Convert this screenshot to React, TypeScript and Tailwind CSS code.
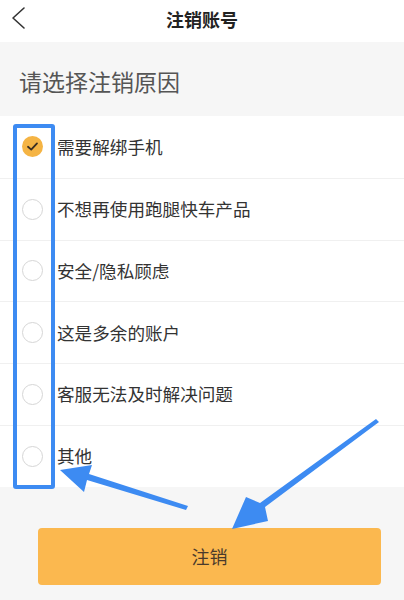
const reasons = [
  '需要解绑手机',
  '不想再使用跑腿快车产品',
  '安全/隐私顾虑',
  '这是多余的账户',
  '客服无法及时解决问题',
  '其他',
];

const font = { fontFamily: '"Noto Sans CJK SC", "Noto Sans", sans-serif' };

export default function App() {
  return (
    <div className="relative w-[404px] h-[600px] overflow-hidden bg-[#f6f6f6]" style={font}>
      {/* Header */}
      <header className="h-[42px] bg-white flex items-center relative">
        <svg className="absolute left-[8px] top-[5px]" width="22" height="26" viewBox="0 0 22 26" fill="none">
          <path d="M16 3 L5 13 L16 23" stroke="#333" strokeWidth="1.6" strokeLinecap="round" strokeLinejoin="round" />
        </svg>
        <div className="flex-1 text-center text-[18px] font-bold text-[#222] -mt-[4px]">注销账号</div>
      </header>

      {/* Title */}
      <div className="h-[74px] flex items-center px-[19px] pt-[4px] text-[23px] text-[#555]">请选择注销原因</div>

      {/* Reasons */}
      <ul className="bg-white">
        {reasons.map((r, i) => (
          <li
            key={r}
            className={`h-[61.8px] flex items-center pl-[22px] ${i > 0 ? 'border-t border-[#f0f0f0]' : ''}`}
          >
            {i === 0 ? (
              <span className="w-[21px] h-[21px] rounded-full bg-[#f5b444] flex items-center justify-center">
                <svg width="13" height="13" viewBox="0 0 13 13" fill="none">
                  <path d="M2 6.8 L5.2 9.6 L11 3.4" stroke="#3a2e22" strokeWidth="1.8" strokeLinecap="round" strokeLinejoin="round" />
                </svg>
              </span>
            ) : (
              <span className="w-[21px] h-[21px] rounded-full border border-[#d6d6d6] bg-white" />
            )}
            <span className="ml-[14px] text-[17.6px] text-[#333]">{r}</span>
          </li>
        ))}
      </ul>

      {/* Button */}
      <div className="pl-[38px] pr-[23px] pt-[41px]">
        <button className="w-full h-[57px] rounded-[4px] bg-[#fbb84f] text-[18px] text-[#4a3a2c]">注销</button>
      </div>

      {/* Annotation overlay */}
      <div className="absolute left-[13px] top-[124px] w-[42px] h-[365px] border-[4px] border-[#3d8bf2] rounded-[3px]" />
      <svg className="absolute inset-0 pointer-events-none" width="404" height="600" viewBox="0 0 404 600">
        <polygon points="60,470 92,465 89,474 188,506 186,510 87,480 84,492" fill="#3d8bf2" />
        <polygon points="376,419 379,422 265,507 268,521 232,529 246,497 260,503" fill="#3d8bf2" />
      </svg>
    </div>
  );
}
